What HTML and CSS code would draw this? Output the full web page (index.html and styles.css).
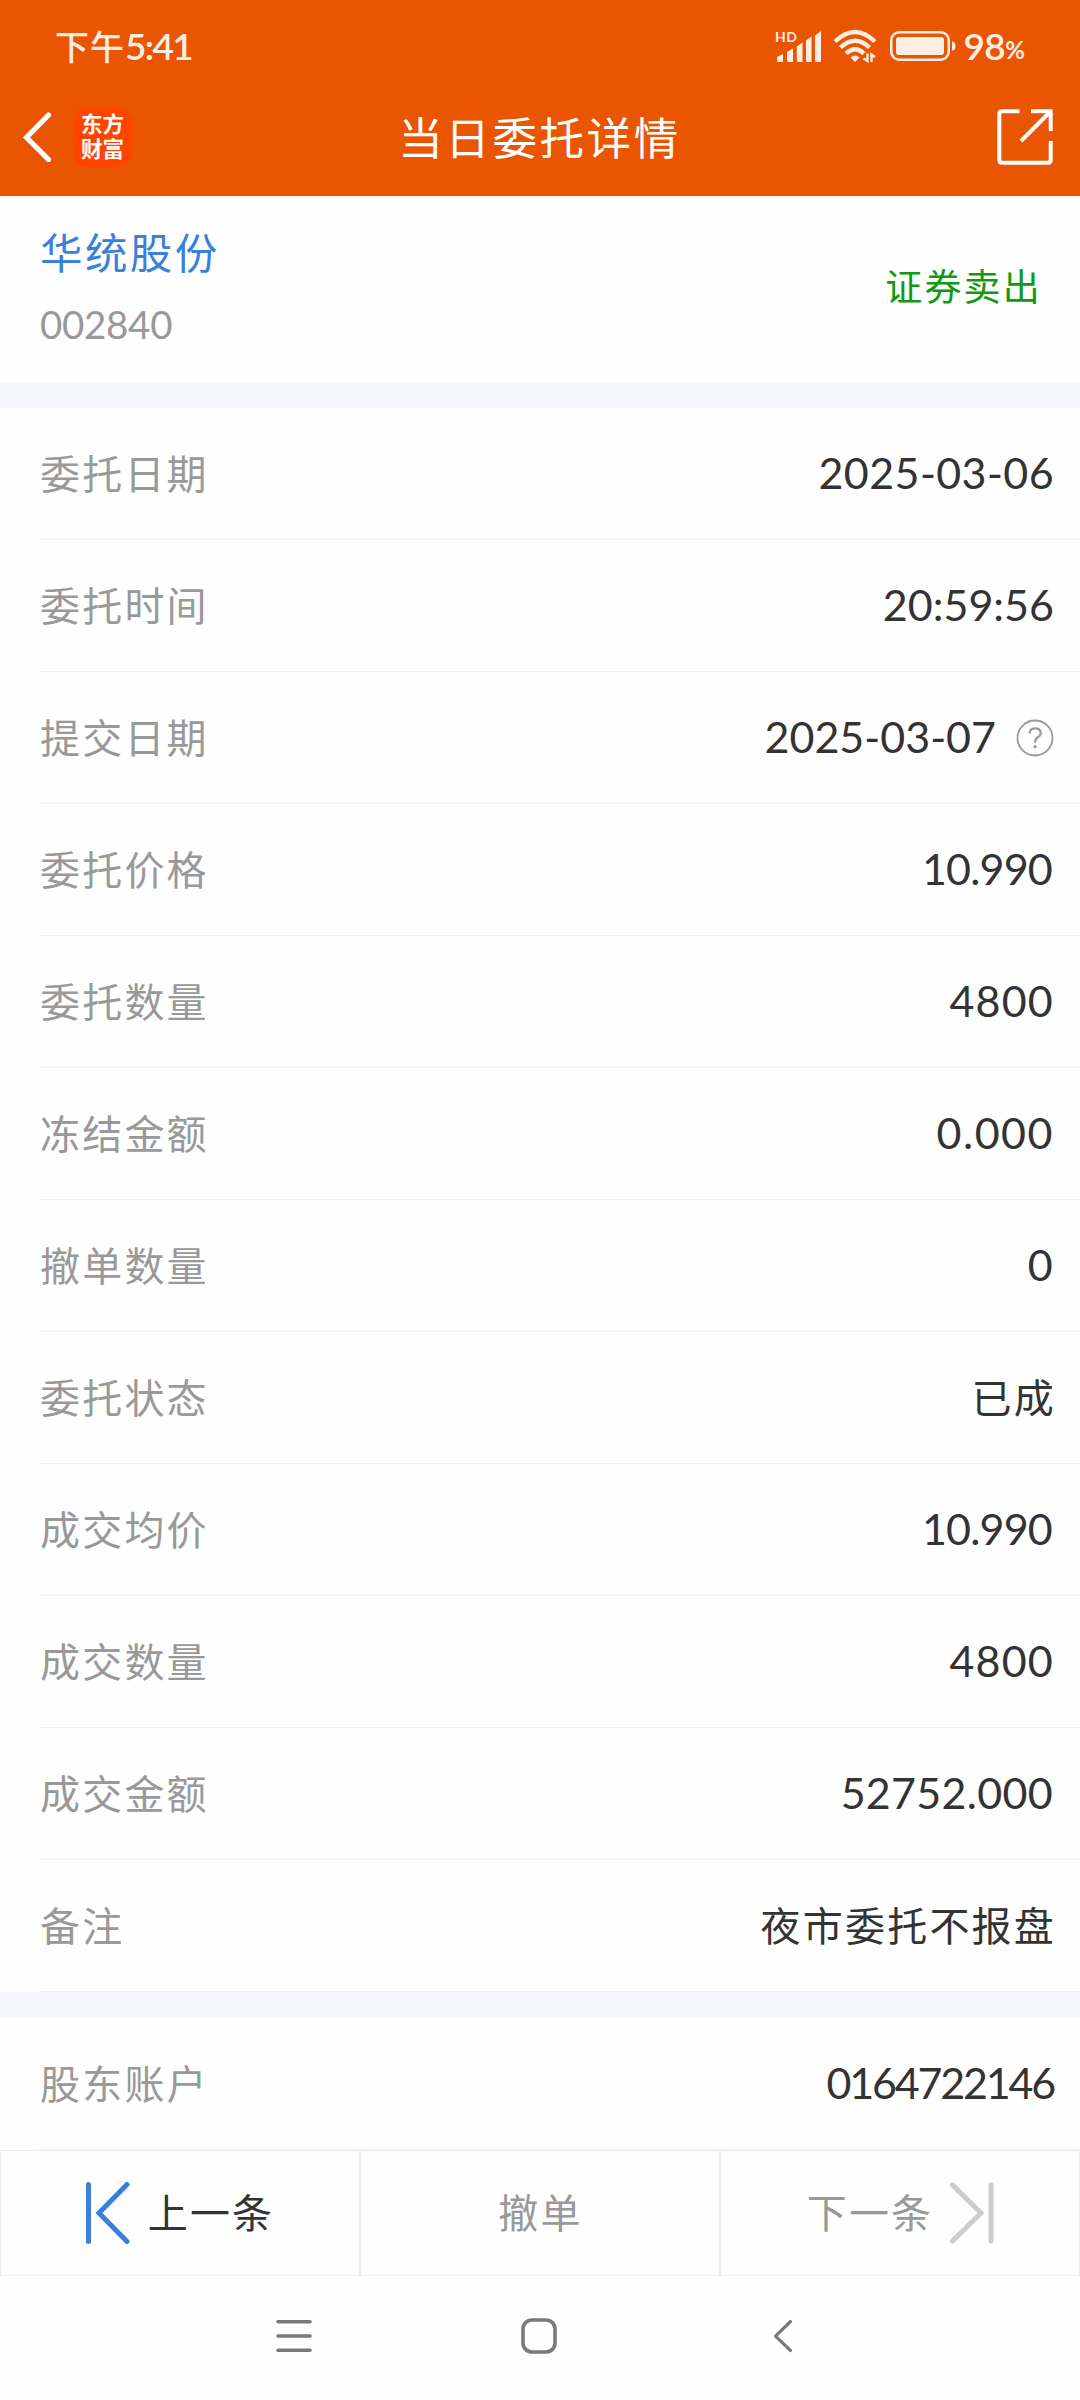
FILE: index.html
```html
<!DOCTYPE html>
<html lang="zh-CN">
<head>
<meta charset="utf-8">
<title>当日委托详情</title>
<link rel="stylesheet" href="styles.css">
</head>
<body>
<div class="screen">
  <header class="header">
    <div class="status">
      <div class="clock"><span class="clock-cn">下午</span><span class="clock-num">5:41</span></div>
      <div class="indicators">
        <svg class="signal" width="48" height="32" viewBox="0 0 48 32" fill="currentColor">
          <text class="hd" x="0" y="12" textLength="22">HD</text>
          <path d="M2 27l6-3v8H3.500q-1.500 0-1.500-1.500zM12 22l6-3.500V32h-4.500q-1.500 0-1.500-1.500zM21.800 16.500l5.700-4V32h-4.200q-1.500 0-1.500-1.500zM31 10.500l5.500-4V32h-4q-1.500 0-1.500-1.500zM40 5.500l6-4.500V32h-4.500q-1.500 0-1.500-1.500z"/>
        </svg>
        <svg class="wifi" width="44" height="34" viewBox="0 0 44 34" fill="none" stroke="currentColor" stroke-width="4.400">
          <path d="M2 12.500Q22-6.500 42 12.500"/>
          <path d="M7.500 18.500Q22 5 36.500 18.500"/>
          <path d="M13 24.500Q22 16 31 24.500"/>
          <path d="M17.500 28.500Q22 24.500 26.500 28.500L22 33z" fill="currentColor" stroke="none"/>
          <path d="M30.500 29.500L34.500 32V24.500M42 28L38.500 25.500V33" stroke-width="2.400"/>
        </svg>
        <svg class="battery" width="66" height="30" viewBox="0 0 66 30">
          <rect x="1.250" y="1.250" width="57.500" height="27.500" rx="8" fill="none" stroke="currentColor" stroke-width="2.500"/>
          <rect x="6" y="6" width="48" height="18" rx="3" fill="currentColor"/>
          <path d="M62 10.500q3.500 0 3.500 4.500t-3.500 4.500z" fill="currentColor"/>
        </svg>
        <span class="level">98</span><span class="percent">%</span>
      </div>
    </div>
    <nav class="navbar">
      <div class="nav-left">
        <svg width="30" height="50" viewBox="0 0 30 50" fill="none" stroke="#fff" stroke-width="5.200" stroke-linecap="round"><path d="M26.500 3L4.500 25.500L26.500 47.500"/></svg>
        <div class="logo">东方<br>财富</div>
      </div>
      <h1 class="title">当日委托详情</h1>
      <svg class="share" width="56" height="56" viewBox="0 0 56 56" fill="none" stroke="#fff" stroke-width="4">
        <path d="M22.500 2.300H5Q2.300 2.300 2.300 5V51Q2.300 53.700 5 53.700H51Q53.700 53.700 53.700 51V32M34 2.300H53.700V22M53 3L24 32"/>
      </svg>
    </nav>
  </header>

  <section class="stock">
    <div>
      <div class="stock-name">华统股份</div>
      <div class="stock-code">002840</div>
    </div>
    <div class="side">证券卖出</div>
  </section>

  <section class="list">
    <div class="row"><span class="label">委托日期</span><span class="num date">2025-03-06</span></div>
    <div class="row"><span class="label">委托时间</span><span class="num">20:59:56</span></div>
    <div class="row"><span class="label">提交日期</span><span class="with-help"><span class="num">2025-03-07</span>
      <svg width="38" height="38" viewBox="0 0 38 38" fill="none" stroke="#999" stroke-width="1.800"><circle cx="19" cy="19" r="17.500"/><path d="M13.500 14.500Q14 9.300 19 9.300Q24.700 9.300 24.700 14Q24.700 16.800 21.500 18.500Q19 20 19 23.800" stroke-width="2.200"/><circle cx="19" cy="27.800" r="1.700" fill="#999" stroke="none"/></svg></span></div>
    <div class="row"><span class="label">委托价格</span><span class="num price">10.990</span></div>
    <div class="row"><span class="label">委托数量</span><span class="num qty">4800</span></div>
    <div class="row"><span class="label">冻结金额</span><span class="num frozen">0.000</span></div>
    <div class="row"><span class="label">撤单数量</span><span class="num qty">0</span></div>
    <div class="row"><span class="label">委托状态</span><span class="text">已成</span></div>
    <div class="row"><span class="label">成交均价</span><span class="num price">10.990</span></div>
    <div class="row"><span class="label">成交数量</span><span class="num qty">4800</span></div>
    <div class="row"><span class="label">成交金额</span><span class="num amount">52752.000</span></div>
    <div class="row"><span class="label">备注</span><span class="text">夜市委托不报盘</span></div>
  </section>

  <section class="list">
    <div class="row"><span class="label">股东账户</span><span class="num acct">0164722146</span></div>
  </section>

  <footer class="actions">
    <div class="action prev">
      <svg width="44" height="62" viewBox="0 0 44 62" fill="none" stroke="#3880dc" stroke-width="5" stroke-linecap="round"><path d="M2.500 2.500V59.500M41 2.500L13 31L41 59.500"/></svg>
      <span class="action-text">上一条</span>
    </div>
    <div class="action">
      <span class="action-text">撤单</span>
    </div>
    <div class="action next">
      <span class="action-text">下一条</span>
      <svg width="44" height="62" viewBox="0 0 44 62" fill="none" stroke="#ccc" stroke-width="5" stroke-linecap="round"><path d="M41 3V59M2.500 3L31 31L2.500 59"/></svg>
    </div>
  </footer>

  <div class="system">
    <svg width="36" height="34" viewBox="0 0 36 34" stroke="#7a7a7a" stroke-width="3.600" stroke-linecap="round"><path d="M2 2.800H34M2 17H34M2 31.200H34"/></svg>
    <svg class="home" width="36" height="36" viewBox="0 0 36 36" fill="none" stroke="#7a7a7a" stroke-width="3.600"><rect x="2" y="2" width="32" height="32" rx="9"/></svg>
    <svg width="20" height="34" viewBox="0 0 20 34" fill="none" stroke="#7a7a7a" stroke-width="3.200" stroke-linecap="round" stroke-linejoin="round"><path d="M17.500 2.500L2.500 17.200L17.500 31.500"/></svg>
  </div>
</div>
</body>
</html>
```
FILE: styles.css
```css
* { box-sizing: border-box; }
body {
  margin: 0;
  background: #fff;
  font-family: "Noto Sans CJK SC", sans-serif;
  color: #333;
}
svg { display: block; flex: none; }
.screen {
  width: 1080px;
  height: 2400px;
  display: flex;
  flex-direction: column;
  background: #fefefe;
  overflow: hidden;
}

/* header */
.header { height: 196px; background: #ea5502; }
.status {
  height: 92px;
  padding: 0 54px 0 55px;
  display: flex;
  align-items: center;
  justify-content: space-between;
  color: #fdeee5;
}
.clock { display: flex; align-items: center; line-height: 40px; font-weight: 500; }
.clock-cn { font-size: 34px; letter-spacing: 1px; padding-bottom: 1px; }
.clock-num { font-family: Lato, sans-serif; font-weight: 600; font-size: 37px; letter-spacing: -1.7px; }
.indicators { display: flex; align-items: center; line-height: 40px; font-family: Lato, sans-serif; font-weight: 600; }
.signal { overflow: visible; }
.hd { font: 700 14px Lato, sans-serif; }
.wifi { margin-left: 10px; }
.battery { margin-left: 13px; }
.level { margin-left: 7px; font-size: 37px; letter-spacing: -0.5px; }
.percent { font-size: 24px; font-weight: 700; padding-top: 8px; margin-right: 1px; }
.navbar {
  height: 90px;
  padding: 0 27px 0 22px;
  display: grid;
  grid-template-columns: 1fr auto 1fr;
  align-items: center;
}
.nav-left { display: flex; align-items: center; gap: 21px; }
.logo {
  width: 59px;
  height: 59px;
  padding-top: 2px;
  border-radius: 14px;
  background: #ff4400;
  color: #fff;
  font-size: 21.5px;
  font-weight: 700;
  line-height: 25px;
  text-align: center;
}
.title {
  margin: 0;
  padding: 0 0 3px 4px;
  font-size: 44.5px;
  font-weight: 400;
  letter-spacing: 2.6px;
  line-height: 60px;
  color: #fff;
}
.share { justify-self: end; }

/* stock summary */
.stock {
  height: 186px;
  padding: 25px 38px 0 40px;
  display: flex;
  justify-content: space-between;
}
.stock-name { font-size: 42.5px; letter-spacing: 2.4px; line-height: 60px; color: #3880dc; }
.stock-code { font-family: Lato, sans-serif; font-size: 38.5px; letter-spacing: -0.3px; line-height: 50px; margin-top: 18px; color: #999; }
.side { font-size: 37px; letter-spacing: 2.2px; line-height: 60px; margin-top: 34px; color: #109a10; }

/* detail rows */
.list { border-top: 26px solid #f6f7fa; }
.row {
  height: 132px;
  padding: 0 26px 0 40px;
  display: flex;
  align-items: center;
  justify-content: space-between;
  background: linear-gradient(#eee, #eee) 39px 100% / 100% 1px no-repeat;
}
.label, .text, .action-text { font-size: 40px; letter-spacing: 2.2px; line-height: 60px; padding-bottom: 5px; }
.label { color: #999; }
.text { margin-right: -2px; }
.num { font-family: Lato, sans-serif; font-size: 43px; line-height: 60px; padding-bottom: 2px; }
.with-help { display: flex; align-items: center; gap: 20px; }
.date { letter-spacing: 0.4px; }
.price { letter-spacing: -0.8px; padding-right: 2px; }
.qty { letter-spacing: 1.2px; }
.frozen { letter-spacing: 1.5px; }
.amount { letter-spacing: 0.3px; padding-right: 1px; }
.acct { letter-spacing: -2.2px; }

/* bottom bar */
.actions { height: 126px; display: grid; grid-template-columns: repeat(3, 1fr); }
.action {
  border: 1px solid #eee;
  display: flex;
  align-items: center;
  justify-content: center;
  gap: 17px;
  color: #999;
}
.action-text { margin-left: 1px; }
.prev { color: #333; }
.system {
  height: 124px;
  padding: 0 287px 5px 276px;
  display: flex;
  align-items: center;
  justify-content: space-between;
}
.home { margin-right: 7px; }
```
